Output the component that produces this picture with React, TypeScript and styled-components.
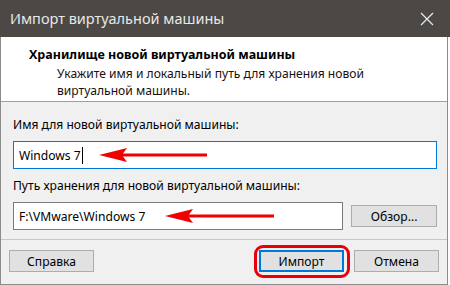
import React from "react";
import styled, { createGlobalStyle } from "styled-components";

const Global = createGlobalStyle`
  html, body { margin: 0; padding: 0; background: #ffffff; }
  body { width: 450px; height: 285px; overflow: hidden; font-family: "Noto Sans", "Segoe UI", sans-serif; }
`;

const Window = styled.div`
  width: 450px;
  height: 285px;
  display: flex;
  flex-direction: column;
`;

const TitleBar = styled.div`
  height: 37px;
  background: #4b4845;
  display: flex;
  align-items: center;
  justify-content: space-between;
  padding: 0 16px 0 10px;
  flex-shrink: 0;
`;

const TitleText = styled.span`
  color: #e8e8e8;
  font-size: 14.5px;
  padding-bottom: 2px;
`;

const Frame = styled.div`
  width: 446px;
  flex: 1;
  border: 1px solid #8c8c8c;
  border-top: none;
  display: flex;
  flex-direction: column;
  background: #f0f0f0;
`;

const Header = styled.div`
  background: #ffffff;
  border-bottom: 1px solid #a0a0a0;
  padding: 9px 0 0 28px;
  box-sizing: border-box;
  height: 65px;
`;

const Heading = styled.div`
  font-weight: 700;
  font-size: 12.5px;
  color: #000;
  line-height: 18px;
`;

const Sub = styled.div`
  font-size: 12.1px;
  color: #1b1010;
  line-height: 17px;
  padding-left: 28px;
  margin-top: 1px;
`;

const Body = styled.div`
  padding: 14px 10px 0 12px;
  display: flex;
  flex-direction: column;
  border-bottom: 1px solid #c8c8c8;
  height: 138px;
  box-sizing: border-box;
`;

const Label = styled.div`
  font-size: 12.1px;
  color: #000;
  line-height: 18px;
  margin-bottom: 7px;
`;

const Row = styled.div`
  display: flex;
  gap: 8px;
  align-items: center;
  margin-bottom: 8px;
`;

const Field = styled.div<{ $focused?: boolean; $w: number }>`
  position: relative;
  width: ${(p) => p.$w}px;
  height: 28px;
  box-sizing: border-box;
  border: 1px solid ${(p) => (p.$focused ? "#0078d7" : "#7a7a7a")};
  background: #fff;
  font-size: 12.1px;
  color: #000;
  display: flex;
  align-items: center;
  padding-left: 5px;
`;

const Caret = styled.span`
  display: inline-block;
  width: 1px;
  height: 17px;
  background: #000;
  margin-left: 1px;
`;

const Button = styled.div<{ $default?: boolean; $w?: number }>`
  position: relative;
  width: ${(p) => p.$w ?? 85}px;
  height: 22px;
  box-sizing: border-box;
  background: #e1e1e1;
  border: ${(p) => (p.$default ? "2px solid #0078d7" : "1px solid #adadad")};
  font-size: 12.1px;
  color: #000;
  display: flex;
  align-items: center;
  justify-content: center;
`;

const Footer = styled.div`
  flex: 1;
  display: flex;
  align-items: center;
  gap: 10px;
  padding: 0 8px 2px 8px;
`;

const Spacer = styled.div`
  flex: 1;
`;

const Highlight = styled.div`
  position: absolute;
  left: -7px;
  top: -7px;
  right: -8px;
  bottom: -8px;
  border: 3px solid #e8000b;
  border-radius: 9px;
  pointer-events: none;
`;

const ArrowSvg = styled.svg<{ $left: number }>`
  position: absolute;
  left: ${(p) => p.$left}px;
  top: 5px;
  overflow: visible;
`;

function Arrow({ left, length }: { left: number; length: number }) {
  return (
    <ArrowSvg $left={left} width={length} height={16} viewBox={`0 0 ${length} 16`}>
      <rect x={20} y={6.5} width={length - 20} height={3} fill="#f00000" />
      <polygon points="0,8 28,1 23,8 28,15" fill="#f00000" />
    </ArrowSvg>
  );
}

function CloseIcon() {
  return (
    <svg width="14" height="14" viewBox="0 0 14 14">
      <path d="M1 1 L13 13 M13 1 L1 13" stroke="#e8e8e8" strokeWidth="1.3" />
    </svg>
  );
}

export default function App() {
  return (
    <>
      <Global />
      <Window>
        <TitleBar>
          <TitleText>Импорт виртуальной машины</TitleText>
          <CloseIcon />
        </TitleBar>
        <Frame>
          <Header>
            <Heading>Хранилище новой виртуальной машины</Heading>
            <Sub>
              Укажите имя и локальный путь для хранения новой
              <br />
              виртуальной машины.
            </Sub>
          </Header>
          <Body>
            <Label>Имя для новой виртуальной машины:</Label>
            <Row>
              <Field $focused $w={425}>
                Windows 7<Caret />
                <Arrow left={85} length={108} />
              </Field>
            </Row>
            <Label>Путь хранения для новой виртуальной машины:</Label>
            <Row>
              <Field $w={331}>
                F:\VMware\Windows 7
                <Arrow left={151} length={109} />
              </Field>
              <Button $w={86}>Обзор...</Button>
            </Row>
          </Body>
          <Footer>
            <Button>Справка</Button>
            <Spacer />
            <Button $default>
              Импорт
              <Highlight />
            </Button>
            <Button>Отмена</Button>
          </Footer>
        </Frame>
      </Window>
    </>
  );
}
